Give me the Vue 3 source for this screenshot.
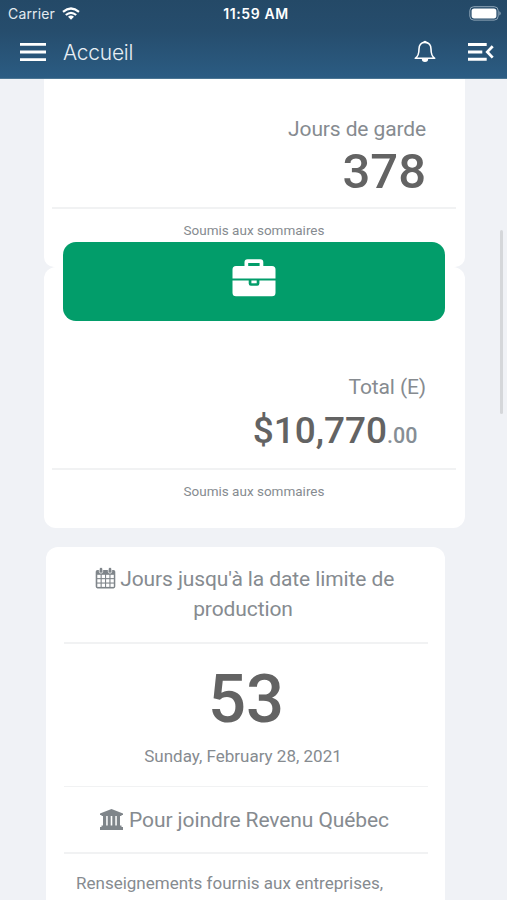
<script setup>
const columns = [2.3, 6.7, 11.1, 15.5]
const rows = [7.8, 12.2, 16.6]
</script>

<template>
  <div class="screen">
    <header class="top">
      <div class="status">
        <div class="carrier">
          <span>Carrier</span>
          <svg class="wifi" viewBox="0 0 18 13" fill="none" stroke="#fff" stroke-width="2.2">
            <path d="M1 4.9Q9-1.9 17 4.9" />
            <path d="M3.8 8Q9 3.6 14.2 8" />
            <path d="M6 9.8Q9 7.2 12 9.8L9 12.8Z" fill="#fff" stroke="none" />
          </svg>
        </div>
        <span class="clock">11:59 AM</span>
        <div class="battery">
          <svg viewBox="0 0 32 15" width="32" height="15">
            <rect x=".8" y=".7" width="28.4" height="13.4" rx="4" fill="none" stroke="#8fa6b8" stroke-width="1" />
            <rect x="2.6" y="2.4" width="24.8" height="10" rx="2.6" fill="#fff" />
            <path d="M30.3 5.2q1.4.6 1.4 2.2t-1.4 2.2z" fill="#8fa6b8" />
          </svg>
        </div>
      </div>
      <nav class="bar">
        <svg class="menu" viewBox="0 0 26 18" fill="#fff">
          <path d="M0 0h26v2.8H0zM0 7.6h26v2.8H0zM0 15.2h26V18H0z" />
        </svg>
        <h1>Accueil</h1>
        <svg class="bell" viewBox="0 0 22 24" fill="none" stroke="#fff" stroke-width="1.6" stroke-linejoin="round">
          <path d="M11 2.4C7 2.4 5 5.4 5 9c0 5.800-1.200 7.400-3.700 9.300h19.400C18.200 16.400 17 14.800 17 9c0-3.600-2-6.600-6-6.600z" />
          <path d="M9.200 2.600a1.800 1.800 0 0 1 3.600 0z" fill="#fff" stroke="none" />
          <path d="M7.800 18.800h6.400a3.200 3.200 0 0 1-6.400 0z" fill="#fff" stroke="none" />
        </svg>
        <svg class="collapse" viewBox="0 0 26 18" fill="#fff">
          <path d="M0 0h18.700v2.900H0zM0 7.500h14.300v2.900H0zM0 14.800h18.700v2.900H0z" />
          <path d="M24.700 3.200 19.300 8.900l5.400 5.700" fill="none" stroke="#fff" stroke-width="2.8" />
        </svg>
      </nav>
    </header>

    <main class="content">
      <section class="card days">
        <p class="label">Jours de garde</p>
        <p class="count">378</p>
        <hr />
        <p class="note">Soumis aux sommaires</p>
      </section>

      <section class="card total">
        <div class="banner">
          <svg viewBox="0 0 44 38" width="44" height="38">
            <path d="M12.500 7V3.200A3 3 0 0 1 15.500.2h12.800a3 3 0 0 1 3 3V7H40a3.500 3.500 0 0 1 3.500 3.500v9.100H.5v-9.100A3.500 3.500 0 0 1 4 7zM16.200 7h11.400V4H16.200z" fill="#fff" fill-rule="evenodd" />
            <path d="M.5 21.500h16.200v3a2.200 2.200 0 0 0 2.200 2.200h6.300a2.200 2.200 0 0 0 2.200-2.200v-3h16.100v12.200a3.500 3.500 0 0 1-3.500 3.500H4a3.500 3.500 0 0 1-3.500-3.500z" fill="#fff" />
            <path d="M19.400 21.500h5.300v2.800h-5.300z" fill="#fff" />
          </svg>
        </div>
        <p class="label">Total (E)</p>
        <p class="amount">$10,770<small>.00</small></p>
        <hr />
        <p class="note">Soumis aux sommaires</p>
      </section>

      <section class="card deadline">
        <h2>
          <span class="line">
            <svg class="calendar" viewBox="0 0 21 22">
              <path d="M2.500 3h16A1.800 1.800 0 0 1 20.300 4.800v14.800a1.800 1.800 0 0 1-1.800 1.800h-16A1.800 1.800 0 0 1 .7 19.600V4.800A1.800 1.800 0 0 1 2.500 3z" fill="#7f858a" />
              <g fill="#fff">
                <template v-for="x in columns" :key="x">
                  <rect v-for="y in rows" :key="y" :x="x" :y="y" width="3.300" height="3.300" />
                </template>
              </g>
              <g fill="#7f858a" stroke="#fff" stroke-width=".7">
                <rect x="4.300" y=".4" width="3.400" height="5.800" rx="1.600" />
                <rect x="13.300" y=".4" width="3.400" height="5.800" rx="1.600" />
              </g>
            </svg>
            <span>Jours jusqu'à la date limite de</span>
          </span>
          <span class="line">production</span>
        </h2>
        <hr />
        <p class="remaining">53</p>
        <p class="date">Sunday, February 28, 2021</p>
        <hr />
        <h3>
          <svg class="bank" viewBox="0 0 23 21" fill="#7f858a">
            <path d="M11.500 0 23 4.500V6h-1.500v1H1.500V6H0V4.500zM3 7h3.200v9.500h1.500V7h3v9.500h1.600V7h3v9.500h1.500V7H20v9.500h1.500V18h-20v-1.500H3zM0 18h23v3H0z" />
          </svg>
          <span>Pour joindre Revenu Québec</span>
        </h3>
        <hr />
        <p class="info">Renseignements fournis aux entreprises,</p>
      </section>
      <div class="scrollbar"></div>
    </main>
  </div>
</template>

<style>
body { background: #f0f2f6; }
</style>

<style scoped>
.screen {
  height: 900px;
  overflow: hidden;
  background: #f0f2f6;
  font-family: Roboto, "Liberation Sans", sans-serif;
  color: #868b90;
}
p, h1, h2, h3 { margin: 0; font-weight: 400; white-space: nowrap; }
hr { border: 0; margin: 0; height: 1.500px; background: #f1f2f3; }
.top {
  box-sizing: border-box;
  height: 79px;
  background: linear-gradient(#244967, #264d6d 40%, #2b5c83);
  border-bottom: 1px solid #4b7593;
  color: #fff;
  font-family: Inter, "Liberation Sans", sans-serif;
}
.status { display: grid; grid-template-columns: 1fr auto 1fr; height: 27px; align-items: center; padding: 0 6px 0 8px; }
.carrier { display: flex; align-items: center; gap: 7px; font-size: 14px; color: #e3eaf0; }
.carrier span { letter-spacing: .15px; }
.wifi { width: 18px; height: 13px; }
.clock { margin-left: 3px; font-size: 14px; font-weight: 600; letter-spacing: .6px; }
.battery { display: flex; justify-content: flex-end; }
.bar { display: flex; align-items: center; height: 50px; padding: 0 13px 0 20px; }
.menu { width: 26px; height: 18px; }
h1 { margin-left: 17px; padding-top: 2px; flex: 1; font-size: 21px; font-weight: 300; line-height: 48px; letter-spacing: -.25px; color: #e7eef4; }
.bell { width: 22px; height: 24px; }
.collapse { width: 26px; height: 18px; margin-left: 32px; }
.content { position: relative; height: 821px; }
.card { box-sizing: border-box; background: #fff; }
.days { width: 421px; height: 188px; margin-left: 44px; padding: 36px 9px 0 8px; border-radius: 0 0 10px 10px; }
.label { font-size: 21px; line-height: 28px; letter-spacing: -.12px; text-align: right; padding-right: 30px; }
.count { font-size: 49px; line-height: 58px; font-weight: 500; color: #636363; text-align: right; padding-right: 30px; height: 64px; }
.note { font-size: 13.500px; line-height: 18px; text-align: center; margin-top: 12px; }
.total { width: 421px; height: 261px; margin-left: 44px; padding: 0 9px 0 8px; border-radius: 12px; }
.banner {
  position: relative;
  top: -25px;
  box-sizing: border-box;
  height: 79px;
  margin: 0 11px 27px;
  padding-top: 17px;
  border-radius: 13px;
  background: #029d6a;
  text-align: center;
}
.amount { height: 67px; font-size: 37px; line-height: 60px; font-weight: 500; color: #636363; text-align: right; padding-right: 38.500px; }
.amount small { font-size: 21.500px; font-weight: 500; color: #868e95; }
.deadline { width: 399px; height: 370px; margin: 19px 0 0 46px; padding: 17px 17px 0 18px; border-radius: 12px 12px 0 0; }
h2, h3 { font-size: 21px; line-height: 30px; letter-spacing: -.1px; text-align: center; }
h2 { height: 78px; }
.line { display: block; padding-right: 6px; }
.line:first-child { padding-right: 3px; }
.calendar { width: 21px; height: 22px; margin-right: 4.500px; vertical-align: -3px; }
.bank { width: 23px; height: 21px; margin-right: 6px; vertical-align: -3px; }
.remaining { height: 98px; font-size: 67px; line-height: 110px; font-weight: 500; text-align: center; color: #636363; }
.date { padding-right: 6px; font-size: 17px; line-height: 29px; height: 44px; text-align: center; }
h3 { padding: 18px 3px 18px 0; height: 29px; }
.info { margin: 16px 0 0 12px; font-size: 17px; line-height: 26px; }
.scrollbar { position: absolute; right: 4px; top: 151px; width: 3px; height: 184px; border-radius: 2px; background: #d5d7da; }
</style>
